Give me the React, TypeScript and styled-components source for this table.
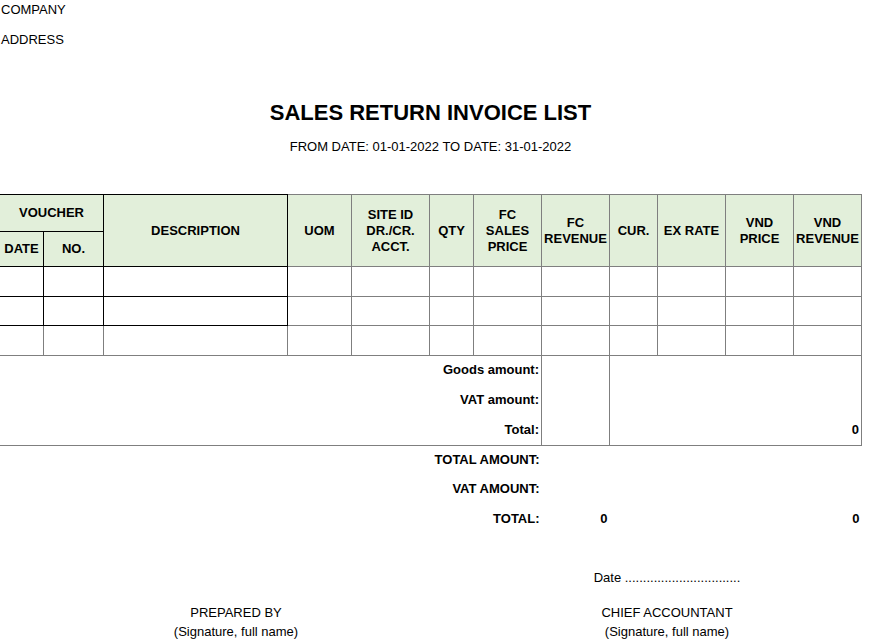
import React from "react";
import styled, { createGlobalStyle } from "styled-components";

const GlobalStyle = createGlobalStyle`
	body {
		margin: 0;
		background: #fff;
	}
`;

const widths = [43, 60, 184, 64, 78, 44, 68, 68, 48, 68, 68, 68];

const Page = styled.div`
	width: 882px;
	padding-top: 1px;
	font-family: "Liberation Sans", Arial, sans-serif;
	font-size: 13px;
	color: #000;
`;

const InfoLine = styled.div`
	height: 30px;
	line-height: 18px;
	padding-left: 1px;
`;

const Title = styled.h1`
	width: 861px;
	margin: 39px 0 0;
	font-size: 22px;
	line-height: 26px;
	font-weight: bold;
	text-align: center;
`;

const Period = styled.div`
	width: 861px;
	margin-top: 12px;
	line-height: 18px;
	text-align: center;
`;

const Sheet = styled.table`
	margin: 38px 0 0 -1px;
	border-collapse: collapse;
	table-layout: fixed;
	width: 863px;
`;

const HeadCell = styled.th<{ $dark?: boolean; $h?: number }>`
	height: ${(p) => p.$h ?? 35}px;
	padding: 0 1px;
	background: #e2efda;
	border: 1px solid ${(p) => (p.$dark ? "#000" : "#7f7f7f")};
	font-size: 13px;
	font-weight: bold;
	line-height: 16px;
	text-align: center;
	vertical-align: middle;
`;

const Cell = styled.td<{ $dark?: boolean; $h: number }>`
	height: ${(p) => p.$h}px;
	padding: 0;
	border: 1px solid ${(p) => (p.$dark ? "#000" : "#7f7f7f")};
`;

const SumCell = styled.td<{
	$h: number;
	$side?: boolean;
	$bottom?: boolean;
}>`
	height: ${(p) => p.$h}px;
	padding: 0 2px 2px 0;
	border-left: ${(p) => (p.$side ? "1px solid #7f7f7f" : "none")};
	border-right: ${(p) => (p.$side ? "1px solid #7f7f7f" : "none")};
	border-bottom: ${(p) => (p.$bottom ? "1px solid #7f7f7f" : "none")};
	font-weight: bold;
	text-align: right;
	vertical-align: middle;
	white-space: nowrap;
`;

const Footer = styled.div`
	display: grid;
	grid-template-columns: 472px 390px;
	margin-top: 35px;
	text-align: center;
`;

const DateLine = styled.div`
	grid-column: 2;
	line-height: 18px;
	margin-bottom: 16px;
`;

const SignBlock = styled.div`
	line-height: 19px;
`;

const dataRows = [
	{ h: 29, dark: true },
	{ h: 28, dark: true },
	{ h: 29, dark: false },
];

const summary = [
	{ label: "Goods amount:", total: "", h: 27 },
	{ label: "VAT amount:", total: "", h: 28 },
	{ label: "Total:", total: "0", h: 28 },
];

const totals = [
	{ label: "TOTAL AMOUNT:", fc: "", vnd: "", h: 27 },
	{ label: "VAT AMOUNT:", fc: "", vnd: "", h: 27 },
	{ label: "TOTAL:", fc: "0", vnd: "0", h: 28 },
];

export default function App() {
	return (
		<Page>
			<GlobalStyle />
			<InfoLine>COMPANY</InfoLine>
			<InfoLine>ADDRESS</InfoLine>
			<Title>SALES RETURN INVOICE LIST</Title>
			<Period>FROM DATE: 01-01-2022 TO DATE: 31-01-2022</Period>

			<Sheet>
				<colgroup>
					{widths.map((w, i) => (
						<col key={i} style={{ width: w + (i === 0 ? 1 : 0) }} />
					))}
				</colgroup>
				<thead>
					<tr>
						<HeadCell $dark colSpan={2} $h={36}>VOUCHER</HeadCell>
						<HeadCell $dark rowSpan={2}>DESCRIPTION</HeadCell>
						<HeadCell rowSpan={2}>UOM</HeadCell>
						<HeadCell rowSpan={2}>SITE ID<br />DR./CR.<br />ACCT.</HeadCell>
						<HeadCell rowSpan={2}>QTY</HeadCell>
						<HeadCell rowSpan={2}>FC<br />SALES<br />PRICE</HeadCell>
						<HeadCell rowSpan={2}>FC<br />REVENUE</HeadCell>
						<HeadCell rowSpan={2}>CUR.</HeadCell>
						<HeadCell rowSpan={2}>EX RATE</HeadCell>
						<HeadCell rowSpan={2}>VND<br />PRICE</HeadCell>
						<HeadCell rowSpan={2}>VND<br />REVENUE</HeadCell>
					</tr>
					<tr>
						<HeadCell $dark $h={34}>DATE</HeadCell>
						<HeadCell $dark $h={34}>NO.</HeadCell>
					</tr>
				</thead>
				<tbody>
					{dataRows.map((r, ri) => (
						<tr key={ri}>
							{widths.map((_, ci) => (
								<Cell key={ci} $h={r.h} $dark={r.dark && ci < 3} />
							))}
						</tr>
					))}
					{summary.map((s, si) => (
						<tr key={"s" + si}>
							<SumCell colSpan={7} $h={s.h} $bottom={si === 2}>{s.label}</SumCell>
							<SumCell $h={s.h} $side $bottom={si === 2} />
							<SumCell colSpan={4} $h={s.h} $side $bottom={si === 2}>{s.total}</SumCell>
						</tr>
					))}
					{totals.map((t, ti) => (
						<tr key={"t" + ti}>
							<SumCell colSpan={7} $h={t.h}>{t.label}</SumCell>
							<SumCell $h={t.h}>{t.fc}</SumCell>
							<SumCell colSpan={4} $h={t.h}>{t.vnd}</SumCell>
						</tr>
					))}
				</tbody>
			</Sheet>

			<Footer>
				<DateLine>Date ................................</DateLine>
				<SignBlock>PREPARED BY<br />(Signature, full name)</SignBlock>
				<SignBlock>CHIEF ACCOUNTANT<br />(Signature, full name)</SignBlock>
			</Footer>
		</Page>
	);
}
